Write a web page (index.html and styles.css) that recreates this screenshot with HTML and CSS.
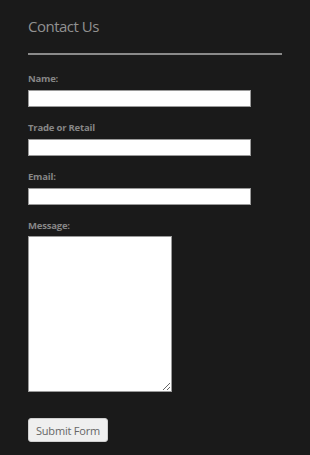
FILE: index.html
```html
<!DOCTYPE html>
<html lang="en">
<head>
    <meta charset="UTF-8">
    <meta name="viewport" content="width=device-width, initial-scale=1.0">
    <title>Contact Us</title>
    <link rel="stylesheet" href="styles.css">
</head>
<body>

<div class="contact">
    <h2>Contact Us</h2>
    <hr class="divider">

    <form class="contact-form" onsubmit="return false;">
        <div class="field">
            <label for="name">Name:</label>
            <input type="text" id="name" name="name">
        </div>
        <div class="field">
            <label for="trade">Trade or Retail</label>
            <input type="text" id="trade" name="trade">
        </div>
        <div class="field">
            <label for="email">Email:</label>
            <input type="text" id="email" name="email">
        </div>
        <div class="field">
            <label for="message">Message:</label>
            <textarea id="message" name="message"></textarea>
        </div>
        <button type="submit" class="submit-button">Submit Form</button>
    </form>
</div>

</body>
</html>
```

FILE: styles.css
```css
body {
    margin: 0;
    padding: 0;
    background-color: #1a1a1a;
    font-family: "Open Sans", "DejaVu Sans", sans-serif;
    color: #8a8a8a;
}
.contact {
    padding: 17px 28px 0 28px;
    width: 254px;
}
.contact h2 {
    margin: 0;
    font-size: 15px;
    font-weight: normal;
    line-height: 18px;
    letter-spacing: -0.5px;
    color: #919191;
}
.divider {
    margin: 18px 0 0 0;
    border: none;
    border-top: 2px solid #8a8a8a;
}
.contact-form {
    padding-top: 18px;
}
.field {
    margin-bottom: 15px;
}
.field label {
    display: block;
    font-size: 9.5px;
    font-weight: bold;
    line-height: 12px;
    margin-bottom: 5px;
    letter-spacing: -0.2px;
    color: #868686;
}
.field input {
    display: block;
    box-sizing: border-box;
    width: 223px;
    height: 17px;
    margin: 0;
    padding: 0 3px;
    border: 1px solid #9a9a9a;
    background-color: #fff;
}
.field textarea {
    display: block;
    box-sizing: border-box;
    width: 144px;
    height: 156px;
    margin: -1px 0 0 0;
    border: 1px solid #9a9a9a;
    background-color: #fff;
}
.submit-button {
    margin-top: 11px;
    width: 80px;
    height: 24px;
    padding: 0;
    border: 1px solid #cfcfcf;
    border-radius: 3px;
    background-color: #efefef;
    color: #666;
    font-family: "Open Sans", "DejaVu Sans", sans-serif;
    font-size: 11px;
    letter-spacing: -0.2px;
}
```
